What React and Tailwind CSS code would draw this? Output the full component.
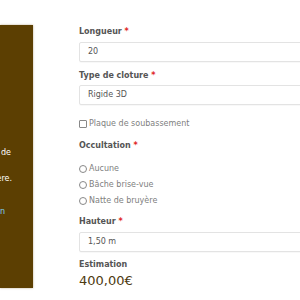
const font = { fontFamily: '"DejaVu Sans", "Liberation Sans", sans-serif' };

function Label({ children }) {
    return (
        <div className="h-[12px] text-[8px] font-bold leading-[12px] text-[#555]">
            {children} <span className="text-[#e02424]">*</span>
        </div>
    );
}

function Field({ value }) {
    return (
        <div className="flex h-[20px] w-[240px] items-center rounded-[2px] border border-[#e3e3e3] bg-white pl-[8px] text-[8px] text-[#555] shadow-[0_1px_1px_rgba(0,0,0,0.03)]">
            {value}
        </div>
    );
}

function Radio({ label }) {
    return (
        <div className="flex h-[16px] items-center gap-[2px] text-[8px] text-[#808080]">
            <span className="h-[8px] w-[8px] rounded-full border border-[#888]" />
            {label}
        </div>
    );
}

export default function App() {
    return (
        <div className="flex h-[300px] w-[300px] overflow-hidden bg-white" style={font}>
            {/* side panel */}
            <div className="mt-[25px] flex h-[263px] w-[33px] shrink-0 flex-col overflow-hidden bg-[#5c3f02] shadow-[0_0_2px_rgba(120,90,30,0.5)]">
                <div className="mt-[122px] flex justify-end whitespace-nowrap pr-[22px] text-[8px] leading-[12px] text-white">
                    d'arbres de
                </div>
                <div className="mt-[14px] flex justify-end whitespace-nowrap pr-[21px] text-[8px] leading-[12px] text-white">
                    bruyère.
                </div>
                <div className="mt-[21px] flex justify-end whitespace-nowrap pr-[28px] text-[8px] leading-[12px] text-[#7fd0f0]">
                    lien
                </div>
            </div>

            {/* form */}
            <div className="ml-[46px] flex shrink-0 flex-col">
                <div className="mt-[26px]">
                    <Label>Longueur</Label>
                </div>
                <div className="mt-[4px]">
                    <Field value="20" />
                </div>
                <div className="mt-[8px]">
                    <Label>Type de cloture</Label>
                </div>
                <div className="mt-[3px]">
                    <Field value="Rigide 3D" />
                </div>
                <div className="mt-[13px] flex h-[12px] items-center gap-[2px] text-[8px] text-[#808080]">
                    <span className="h-[8px] w-[8px] rounded-[1px] border border-[#888]" />
                    Plaque de soubassement
                </div>
                <div className="mt-[10px]">
                    <Label>Occultation</Label>
                </div>
                <div className="mt-[9px] flex flex-col">
                    <Radio label="Aucune" />
                    <Radio label="Bâche brise-vue" />
                    <Radio label="Natte de bruyère" />
                </div>
                <div className="mt-[7px]">
                    <Label>Hauteur</Label>
                </div>
                <div className="mt-[4px]">
                    <Field value="1,50 m" />
                </div>
                <div className="mt-[7px] h-[12px] text-[8px] font-bold leading-[12px] text-[#555]">
                    Estimation
                </div>
                <div className="mt-[1px] h-[18px] text-[13px] leading-[18px] text-[#4d3a10]">
                    400,00€
                </div>
            </div>
        </div>
    );
}
